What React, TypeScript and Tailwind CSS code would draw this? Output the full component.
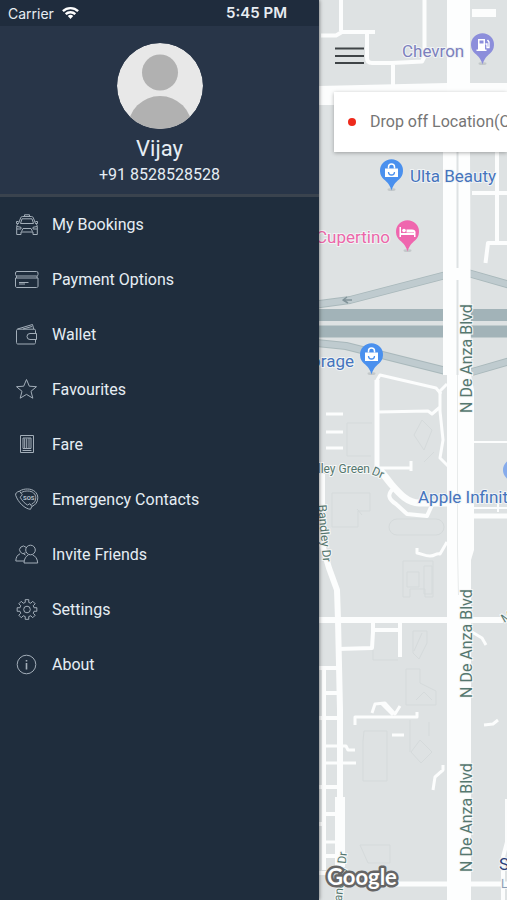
import type { ReactNode } from 'react';

interface MenuItem {
  label: string;
  icon: ReactNode;
}

interface PinProps {
  x: number;
  y: number;
  color: string;
  children: ReactNode;
}

const GEAR_TEETH = 8;

// Outline of a toothed wheel centred at 12,11.5
function gearPath(): string {
  const points: string[] = [];
  const step = (Math.PI * 2) / GEAR_TEETH;

  for (let i = 0; i < GEAR_TEETH; i++) {
    const mid = i * step - Math.PI / 2;
    const corners = [
      [-0.24, 7.3],
      [-0.18, 10],
      [0.18, 10],
      [0.24, 7.3],
    ];
    for (const [offset, radius] of corners) {
      const px = 12 + radius * Math.cos(mid + offset);
      const py = 11.5 + radius * Math.sin(mid + offset);
      points.push(`${px.toFixed(2)} ${py.toFixed(2)}`);
    }
  }

  return `M${points.join('L')}Z`;
}

const menuItems: MenuItem[] = [
  {
    label: 'My Bookings',
    icon: (
      <>
        <path d="M9.5 3.5V1.8h5v1.7M3.5 10.5l2.2-5.7c.3-.9.9-1.3 1.8-1.3h9c.9 0 1.500.4 1.800 1.300l2.200 5.700" />
        <path d="M5.500 10.500 7 5.800h10l1.500 4.700z" />
        <path d="M3.500 8.500H1.500v2h2c-1.300.8-1.800 1.800-1.800 3.300v7.700H6V19h12v2.500h4.300v-7.700c0-1.500-.5-2.500-1.800-3.300h2v-2h-2" />
        <path d="M2 13.500l4 .8V16H2M22 13.500l-4 .8V16h4M6.500 18.500l1.500-3h8l1.500 3" />
      </>
    ),
  },
  {
    label: 'Payment Options',
    icon: (
      <>
        <rect x="0.5" y="3.5" width="22.5" height="4.5" rx="1.5" />
        <path d="M.5 10h22.500v8c0 1-.5 1.500-1.500 1.500H2c-1 0-1.500-.5-1.500-1.500zM1.500 8v2M22 8v2M4 14.500h9.500M4 16h6" />
      </>
    ),
  },
  {
    label: 'Wallet',
    icon: (
      <>
        <path d="M20.500 10.500V7.500c0-.8-.5-1.300-1.300-1.300H3c-1 0-1.500.5-1.500 1.300v12c0 1 .5 1.500 1.500 1.500h16c1 0 1.500-.5 1.500-1.500v-3" />
        <path d="M2.500 6 17.500 1.500l1.200 4.500M8 6l9-2.500M21.500 10.500h-6.500a3 3 0 0 0 0 6h6.500z" />
      </>
    ),
  },
  {
    label: 'Favourites',
    icon: <path d="m11.500 1.500 2.800 6.700 7.200.5-5.500 4.600 1.800 6.900-6.300-3.800-6.300 3.800L7 13.300 1.500 8.700l7.200-.5z" />,
  },
  {
    label: 'Fare',
    icon: (
      <>
        <path d="M5.500 2.500h13v17h-13zM8 5h8v10.500H8zM7.500 17.500h9" />
        <path d="M9.700 5.500v9.500M11.700 5.500v9.500M14 5v10.500" />
      </>
    ),
  },
  {
    label: 'Emergency Contacts',
    icon: (
      <>
        <path d="M4.500 3.200C7 1.500 9.500 1 12.500 1c6 0 10.300 3.800 10.300 8.800 0 4.200-2.300 7.200-6 8.700l-1.300 2.800c-5.500-.3-12.500-7-14.800-14C.2 5.500 1.500 4 4.500 3.200l2.800 3.600-2.100 2.400c1.600 3.200 4.200 6 7.300 7.800l2.400-1.300 2 2.800" />
        <path d="M6.500 4.500C8.500 3.300 10.500 3 12.800 3c4.700 0 8 2.900 8 6.800 0 3-1.600 5.300-4.300 6.500" />
        <text x="8" y="12" fontSize="6" fontWeight="700" fill="#b6c1cc" stroke="none">SOS</text>
      </>
    ),
  },
  {
    label: 'Invite Friends',
    icon: (
      <>
        <circle cx="15.500" cy="7" r="4.800" />
        <path d="M9 20c.3-4.500 1.800-6.500 4.500-8.200M17.500 11.800c3 1.500 4.900 3.700 5.200 8.200H9" />
        <path d="M10.500 9.800a3.700 3.700 0 1 1 .5-5.500M9 18H.8c.2-3.800 1.500-6 4.200-7.200M8.500 10.800l2 1.200" />
      </>
    ),
  },
  {
    label: 'Settings',
    icon: (
      <>
        <path d={gearPath()} strokeLinejoin="round" />
        <circle cx="12" cy="11.500" r="3.300" />
      </>
    ),
  },
  {
    label: 'About',
    icon: (
      <>
        <circle cx="11.500" cy="11.500" r="9.300" />
        <path d="M11.500 10v6.500M11.500 7v1.500" strokeWidth="1.600" />
      </>
    ),
  },
];

// x and y are the centre of the pin's head
function Pin({ x, y, color, children }: PinProps) {
  return (
    <g transform={`translate(${x} ${y})`}>
      <ellipse cx="0" cy="18.500" rx="4" ry="1.500" fill="#c3c8ca" />
      <path
        d="M0 19.500C-1.500 14-4 11.500-7.500 8.500A11.500 11.500 0 1 1 7.500 8.500C4 11.500 1.500 14 0 19.500Z"
        fill={color}
      />
      {children}
    </g>
  );
}

function BagGlyph() {
  return (
    <>
      <path d="M-6.500-2.500h13v8.500h-13z" fill="#fff" />
      <path d="M-3-2.500v-1.500a3 3 0 0 1 6 0v1.500" fill="none" stroke="#fff" strokeWidth="1.500" />
      <path d="M-3 1a3 3 0 0 0 6 0" fill="none" stroke="#4a90ee" strokeWidth="1.300" />
    </>
  );
}

function CityMap() {
  return (
    <svg
      className="absolute inset-0 h-full w-full"
      viewBox="319 0 188 900"
      preserveAspectRatio="xMinYMin slice"
      fontFamily="Roboto, sans-serif"
      aria-label="Map"
      role="img"
    >
      <rect x="319" y="0" width="900" height="900" fill="#dee2e3" />

      {/* Building outlines */}
      <g fill="none" stroke="#d5dadb" strokeWidth="1">
        <path d="M347 423h25M347 423v33h24M332 493h38v18h-12v16h-26zM357 509l5 6M422 420l10 10-8 20-10-15zM424 462l10-10" />
        <rect x="389" y="519" width="55" height="16" rx="8" />
        <path d="M403 561h30v36h-8v-8h-15v8h-7zM407 572h12v15h-12zM424 566h8v28h-8zM373 634v26h25M413 631h14v12l-8 16-6-6zM422 633l-8 18M406 669h14v14l16 8v14h-30zM416 700l8-8 8 8" />
        <path d="M364 731h23v50h-24v-40zM420 740l12 12-11 11-10-11zM410 720v32M429 722v14M360 845h30v18h-22z" />
      </g>

      {/* Highway and its ramps */}
      <g fill="none" strokeLinejoin="round">
        <g stroke="#a9b8bb" strokeWidth="8">
          <path d="M316 304.500 350 300 446 275M468 273l42 12M316 343l30 3 100 25M472 372l38-11" />
        </g>
        <g stroke="#bfcbcf" strokeWidth="6">
          <path d="M316 304.500 350 300 446 275M468 273l42 12M316 343l30 3 100 25M472 372l38-11" />
        </g>
        <path d="M319 315h900M319 331.500h900" stroke="#a2b3b8" strokeWidth="12" />
        <path d="M352 300h-8m3-3-4 3 5 3" stroke="#82949a" strokeWidth="1.500" />
      </g>

      {/* Streets */}
      <g fill="none" stroke="#fcfdfd" strokeLinejoin="round">
        <g strokeWidth="4">
          <path d="M341 0v31M321 35.500h15l6-3.500h33M367 32v26q0 5 5 5h20l30-1.500 2.500-5V0M393 63v26" />
          <path d="M497 150v93M472 193h35M507 243h-19l-2.500 20" />
          <path d="M377 468v-88l3-5 56 13 5 6" strokeWidth="3" />
          <path d="M377 380v88" strokeWidth="5" />
          <path d="M447 384l-7 7v20l3 29-3 18 8 8M378 412l50-1 4 3 8-7M378 468h34M411 461v10" strokeWidth="3" />
          <path d="M326 414h17M326 432h17M326 448h17" strokeWidth="3" />
          <path d="M380 470l11 14c8 9 16 19 28 19h28" strokeWidth="7" />
          <path d="M394 488c-7 6-6 11 2 16l11 10 20 2 5-11" />
          <path d="M472 442h35M474 508h33M498 500v12" strokeWidth="2" />
          <path d="M472 516h35" strokeWidth="5" />
          <path d="M417 548v5c5 1 8 3 13 3 6 0 5-3 10-2l7-12" strokeWidth="3" />
        </g>
        <g strokeWidth="6">
          <path d="M322 474v70l7 24 8 22 1 30 2 90v90" />
          <path d="M319 620h184" />
          <path d="M340 797v70" strokeWidth="10" />
          <path d="M384 884h123" strokeWidth="5" />
        </g>
        <g strokeWidth="4">
          <path d="M373 620v12l-1 16-34 1M373 630h27M400 620v37" />
          <path d="M319 668h19M324 668v202M324 693h14M319 718h20M319 787h20M324 814h15M319 824h5M324 856h14M319 873h9" />
          <path d="M324 746h22l2 4h7M324 763h32M324 842h14M392 735h12M355 725v-8h62v-5" strokeWidth="3" />
          <path d="M372 713l3-9 10-1 10 11 5-8M381 703l12 12M472 632l10 6 4 7M443 765v5l-8 7-2 13M484 725l9-1 5-4" strokeWidth="3" />
          <path d="M507 799v43l-4 15v43" />
        </g>
      </g>
      <path d="M319 86l128-3h60v22H319z" fill="#fcfdfd" />
      <path d="M472 9h24v8h-24z" fill="#fcfdfd" />

      {/* Boulevard */}
      <path d="M447 0h23v150l1 225 3 15v160l-3 10v340h-24V375h-4V150h4z" fill="#fdfefe" />
      <path d="M457.500 152v116M457.500 280v95" stroke="#dee2e3" strokeWidth="2" fill="none" />
      <path d="M457.500 375v175l1 45" stroke="#e8ebeb" strokeWidth="1" fill="none" />

      {/* Place names */}
      <g fontSize="17" stroke="#f1f4f5" strokeWidth="2" paintOrder="stroke">
        <text x="402" y="57" fill="#7c80bd">Chevron</text>
        <text x="410" y="182" fill="#4674bd">Ulta Beauty</text>
        <text x="390" y="243" textAnchor="end" fill="#ec67a9">Cupertino</text>
        <text x="354" y="367" textAnchor="end" fill="#4674bd">Storage</text>
        <text x="418" y="503" fill="#4674bd">Apple Infinite</text>
        <text x="499" y="870" fill="#2b3d78">S</text>
      </g>

      {/* Street names */}
      <g fill="#55776f" stroke="#f6f8f8" strokeWidth="2" paintOrder="stroke">
        <g fontSize="16">
          <text transform="translate(472 413) rotate(-90)">N De Anza Blvd</text>
          <text transform="translate(472 698) rotate(-90)">N De Anza Blvd</text>
          <text transform="translate(472 872) rotate(-90)">N De Anza Blvd</text>
        </g>
        <g fontSize="12">
          <text x="370" y="473" textAnchor="end">Valley Green</text>
          <text transform="translate(371 474) rotate(24)">Dr</text>
          <text transform="translate(318 505) rotate(85)">Bandley Dr</text>
          <text transform="translate(341 909) rotate(-84)">Bandley Dr</text>
          <text transform="translate(504 623) rotate(-30)">M</text>
          <text x="501" y="888" fill="#8b9eb5">L</text>
        </g>
      </g>

      <Pin x={482.5} y={45} color="#8c8edb">
        <path d="M-4.500-6h7v11h-7zM-6 4.500h10v1.500H-6z" fill="#fff" />
        <path d="M-3-4.500h4v3h-4z" fill="#8c8edb" />
        <path d="M3-1h1.500v3.500h2V-3l-1.500-2" fill="none" stroke="#fff" strokeWidth="1.300" />
      </Pin>
      <Pin x={391.5} y={171} color="#4a90ee">
        <BagGlyph />
      </Pin>
      <Pin x={407.5} y={232} color="#ef66ae">
        <path d="M-8-5h1.500v6h13v-1.500H8V5H6.500V3h-13v2H-8zM-1-2.500h5.500q3.500 0 3.500 3H-1z" fill="#fff" />
        <circle cx="-3.500" cy="-1.500" r="1.800" fill="#fff" />
      </Pin>
      <Pin x={371.5} y={355} color="#4a90ee">
        <BagGlyph />
      </Pin>
      <circle cx="514" cy="470" r="11" fill="#86abeb" />

      <text
        x="327"
        y="885"
        fontFamily="Lato, sans-serif"
        fontSize="22"
        fontWeight="700"
        fill="#fff"
        stroke="#666"
        strokeWidth="5"
        strokeLinejoin="round"
        paintOrder="stroke"
      >
        Google
      </text>
    </svg>
  );
}

function StatusBar() {
  return (
    <div className="flex h-[26px] items-center justify-between bg-[#1f2c3d] pr-8 pl-2 font-[Inter,sans-serif] text-[14px] text-[#e8edf2]">
      <div className="flex items-center gap-2">
        <span>Carrier</span>
        <svg className="h-[14px] w-[17px]" viewBox="0 0 17 14" fill="none" stroke="#fff" strokeWidth="2.400" aria-hidden="true">
          <path d="M.9 5.200a11 11 0 0 1 15.200 0M3.700 8.200a7 7 0 0 1 9.600 0" />
          <path d="m8.500 13-2.700-2.900a4 4 0 0 1 5.400 0z" fill="#fff" stroke="none" />
        </svg>
      </div>
      <span className="text-[15px] font-semibold">5:45 PM</span>
    </div>
  );
}

function Profile() {
  return (
    <div className="flex flex-col items-center border-b-[3px] border-[#3a434e] bg-[#283548] pt-[17px] pb-[10px]">
      <svg className="h-[86px] w-[86px] rounded-full" viewBox="0 0 86 86" role="img" aria-label="Profile photo">
        <circle cx="43" cy="43" r="43" fill="#e8e8e8" />
        <circle cx="43" cy="29.500" r="18" fill="#b1b1b1" />
        <circle cx="43" cy="85" r="32" fill="#b1b1b1" />
      </svg>
      <h1 className="mt-1 text-[22px] leading-8">Vijay</h1>
      <p className="text-[16px] leading-[19px]">+91 8528528528</p>
    </div>
  );
}

export default function App() {
  return (
    <div className="flex min-h-screen overflow-hidden font-[Roboto,sans-serif]">
      {/* Drawer */}
      <aside className="z-10 w-[319px] shrink-0 bg-[#1f2d3d] text-[#e6edf4] shadow-[0_0_4px_rgba(0,0,0,0.6)]">
        <StatusBar />
        <Profile />
        <nav>
          <ul>
            {menuItems.map((item) => (
              <li key={item.label}>
                <a href="#" className="flex h-[55px] items-center gap-[13px] px-[15px] text-[16px]">
                  <svg
                    className="h-6 w-6 shrink-0"
                    viewBox="0 0 24 24"
                    fill="none"
                    stroke="#a3aeb9"
                    strokeWidth="1"
                    aria-hidden="true"
                  >
                    {item.icon}
                  </svg>
                  {item.label}
                </a>
              </li>
            ))}
          </ul>
        </nav>
      </aside>

      {/* Map screen */}
      <main className="relative min-w-0 flex-1 overflow-hidden">
        <CityMap />
        <div className="relative pt-10 pl-[15px]">
          <button type="button" aria-label="Open menu" className="flex h-8 w-8 items-center">
            <svg className="h-5 w-[30px]" viewBox="0 0 30 20" stroke="#3f4447" strokeWidth="2" aria-hidden="true">
              <path d="M1 2.500h29M1 10h29M1 17h29" />
            </svg>
          </button>
          <label className="mt-5 flex h-[60px] items-center gap-[14px] bg-white pl-[14px] shadow-[0_1px_4px_rgba(0,0,0,0.3)]">
            <span className="h-2 w-2 shrink-0 rounded-full bg-[#ee2a1c]" />
            <input
              type="text"
              aria-label="Drop off location"
              placeholder="Drop off Location(Optional)"
              className="min-w-0 flex-1 text-[16px] text-[#6f6f6f] outline-none placeholder:text-[#757575]"
            />
          </label>
        </div>
      </main>
    </div>
  );
}
